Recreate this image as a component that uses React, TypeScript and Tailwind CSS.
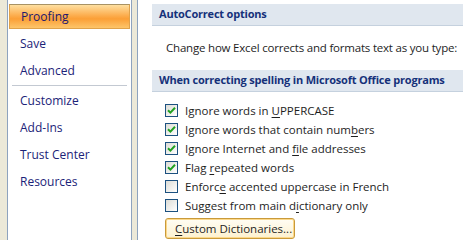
import React from "react";

const font = { fontFamily: '"Open Sans", "Noto Sans", sans-serif' };

type NavItem = { label: string; selected?: boolean; sepBefore?: boolean };

const nav: NavItem[] = [
  { label: "Proofing", selected: true },
  { label: "Save" },
  { label: "Advanced" },
  { label: "Customize", sepBefore: true },
  { label: "Add-Ins" },
  { label: "Trust Center" },
  { label: "Resources" },
];

function Mn({ children }: { children: React.ReactNode }) {
  return <span className="underline underline-offset-2">{children}</span>;
}

function Check({ checked }: { checked: boolean }) {
  return (
    <span className="grid h-[13px] w-[13px] shrink-0 place-items-center border border-[#1c5180] bg-[linear-gradient(135deg,#dcdcd6,#ffffff)]">
      {checked && (
        <svg width="9" height="9" viewBox="0 0 9 9">
          <path d="M1 4.2 L3.4 6.6 L8 1.8" fill="none" stroke="#21a121" strokeWidth="2" />
        </svg>
      )}
    </span>
  );
}

function Header({ children }: { children: React.ReactNode }) {
  return (
    <div className="flex h-[22px] items-center whitespace-nowrap border-b border-[#c5d1de] bg-[#e0e7ef] px-[7px] text-[11px] font-bold tracking-[-0.2px] text-[#15317a]">
      {children}
    </div>
  );
}

export default function App() {
  const rows: [boolean, React.ReactNode][] = [
    [true, <>Ignore words in <Mn>U</Mn>PPERCASE</>],
    [true, <>Ignore words that contain num<Mn>b</Mn>ers</>],
    [true, <>Ignore Internet and <Mn>f</Mn>ile addresses</>],
    [true, <>Flag <Mn>r</Mn>epeated words</>],
    [false, <>Enforc<Mn>e</Mn> accented uppercase in French</>],
    [false, <>Suggest from main d<Mn>i</Mn>ctionary only</>],
  ];

  return (
    <div className="flex h-[240px] w-[463px] overflow-hidden bg-[#ece9d8]" style={font}>
      <div className="w-[7px] shrink-0" />
      <nav className="w-[125px] shrink-0 border-x border-[#8ea3be] bg-white px-[1px] pt-[3px]">
        {nav.map((n) => (
          <React.Fragment key={n.label}>
            {n.sepBefore && <div className="mx-[3px] my-[1px] h-0 border-t border-[#c3c9d2]" />}
            <div className="flex h-[27px] py-[1px]">
              <div
                className={`flex flex-1 items-center pl-[11px] text-[12px] ${
                  n.selected
                    ? "border border-[#e0a24a] border-t-[#a89264] bg-[linear-gradient(to_bottom,#fedfa0,#fcae4f_45%,#fb9f36_60%,#fdc56a)] text-[#22186e]"
                    : "text-[#1b2378]"
                }`}
              >
                {n.label}
              </div>
            </div>
          </React.Fragment>
        ))}
      </nav>
      <div className="w-[5px] shrink-0" />
      <main className="min-w-0 flex-1 overflow-hidden border-l border-[#8ea3be] bg-white pl-[14px] pt-[4px] text-[11.5px] text-[#1e1e1e]">
        <Header>AutoCorrect options</Header>
        <p className="flex h-[44px] items-center whitespace-nowrap pl-[14px] tracking-[-0.2px]">
          Change how Excel corrects and formats text as you type:
        </p>
        <Header>When correcting spelling in Microsoft Office programs</Header>
        <div className="pl-[13px] pt-[9px]">
          {rows.map(([c, label], i) => (
            <div key={i} className="flex h-[19px] items-center gap-[7px]">
              <Check checked={c} />
              <span className="whitespace-nowrap">{label}</span>
            </div>
          ))}
          <button
            type="button"
            className="mt-[3px] h-[21px] w-[130px] whitespace-nowrap rounded-[3px] border border-[#c99a3a] bg-[linear-gradient(to_bottom,#fffdf4,#fdf1cf)] pl-[9px] text-left text-[11.5px] text-[#1e1e1e] shadow-[inset_0_0_0_1px_#fcd88a]"
          >
            <Mn>C</Mn>ustom Dictionaries...
          </button>
        </div>
      </main>
    </div>
  );
}
